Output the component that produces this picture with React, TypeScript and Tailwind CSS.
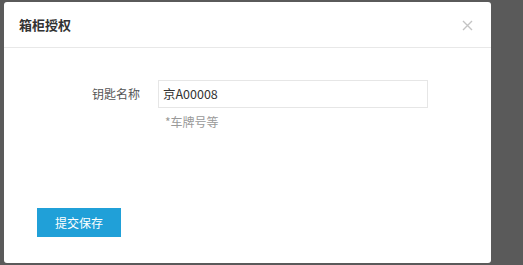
import React from "react";

export default function App() {
  return (
    <div
      className="w-[523px] h-[265px] bg-[#5a5a5a] pt-[2px] pl-[4px] overflow-hidden"
      style={{ fontFamily: '"Noto Sans CJK SC", "Noto Sans", sans-serif' }}
    >
      <div className="w-[487px] h-[261px] bg-white rounded-[3px] flex flex-col">
        <div className="h-[46px] border-b border-[#e8e8e8] flex items-center justify-between pl-[15px] pr-[18px]">
          <span className="text-[13px] font-bold text-[#333]">箱柜授权</span>
          <svg width="11" height="11" viewBox="0 0 11 11" className="mt-[1px]">
            <path d="M1 1 L10 10 M10 1 L1 10" stroke="#c4c4c4" strokeWidth="1.4" />
          </svg>
        </div>
        <div className="flex items-start mt-[32px]">
          <div className="w-[136px] h-[28px] flex items-center justify-end text-[12px] text-[#555]">
            钥匙名称
          </div>
          <div className="ml-[18px] flex flex-col">
            <div className="w-[270px] h-[28px] border border-[#e6e6e6] flex items-center pl-[4px] text-[12.5px] text-[#333]">
              京A00008
            </div>
            <div className="mt-[5px] pl-[7px] text-[12px] text-[#999] leading-[18px]">*车牌号等</div>
          </div>
        </div>
        <div className="mt-[77px] pl-[33px]">
          <button className="w-[84px] h-[29px] bg-[#20a0d8] text-white text-[12px] flex items-center justify-center">
            提交保存
          </button>
        </div>
      </div>
    </div>
  );
}
